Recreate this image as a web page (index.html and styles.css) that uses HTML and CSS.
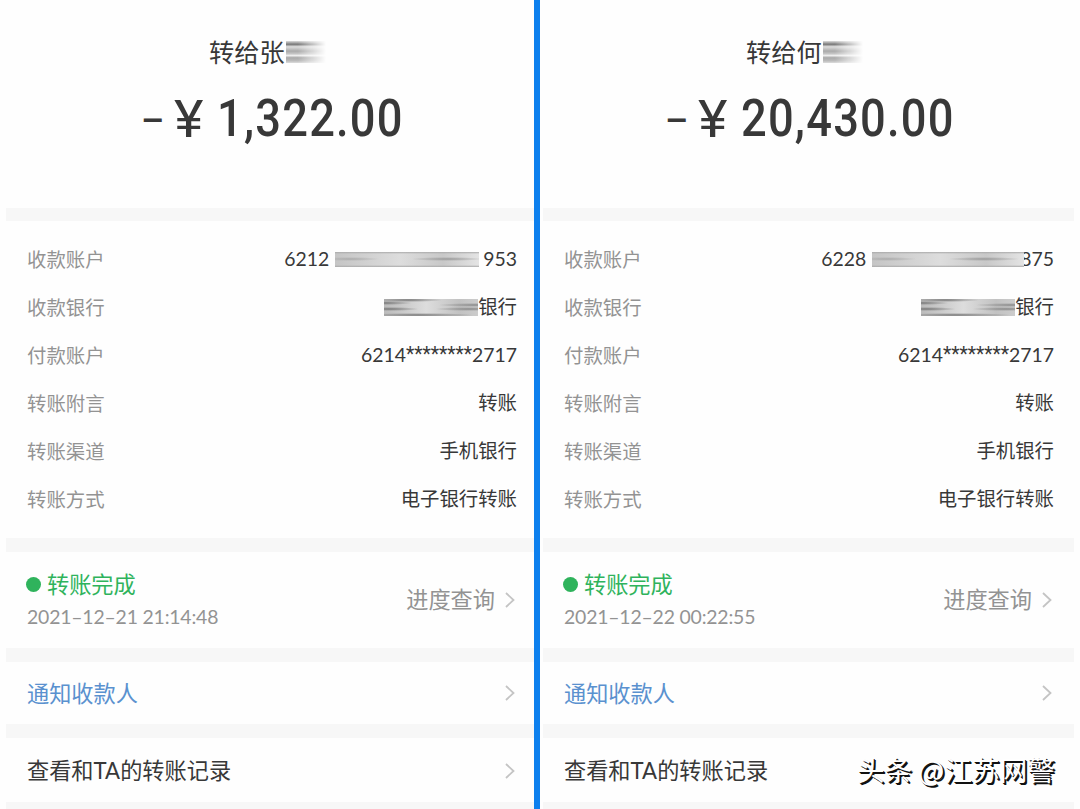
FILE: index.html
```html
<!DOCTYPE html>
<html lang="zh-CN">
  <head>
    <meta charset="UTF-8" />
    <meta name="viewport" content="width=device-width, initial-scale=1.0" />
    <title>转账详情</title>
    <link rel="stylesheet" href="styles.css">
  </head>

  <body>
    <div class="compare">
      <section class="panel">
        <header class="summary">
          <h1>转给张<span class="smudge smudge-name"></span></h1>
          <p class="amount"><span class="minus">–</span><span class="yen">¥</span><span class="number">1,322.00</span></p>
        </header>

        <div class="details">
          <div class="row"><span class="label">收款账户</span><span class="value">6212<span class="smudge smudge-account"></span>953</span></div>
          <div class="row"><span class="label">收款银行</span><span class="value"><span class="smudge smudge-bank"></span>银行</span></div>
          <div class="row"><span class="label">付款账户</span><span class="value">6214<span class="stars">********</span>2717</span></div>
          <div class="row"><span class="label">转账附言</span><span class="value">转账</span></div>
          <div class="row"><span class="label">转账渠道</span><span class="value">手机银行</span></div>
          <div class="row"><span class="label">转账方式</span><span class="value">电子银行转账</span></div>
        </div>

        <div class="status">
          <div>
            <p class="status-title"><span class="dot"></span>转账完成</p>
            <p class="time">2021<i>–</i>12<i>–</i>21 21:14:48</p>
          </div>
          <span class="progress">进度查询</span>
          <svg class="chevron" viewBox="0 0 10 16"><path d="M1 1l7.5 7L1 15" /></svg>
        </div>

        <div class="link notify">
          <span>通知收款人</span>
          <svg class="chevron" viewBox="0 0 10 16"><path d="M1 1l7.5 7L1 15" /></svg>
        </div>

        <div class="link records">
          <span>查看和TA的转账记录</span>
          <svg class="chevron" viewBox="0 0 10 16"><path d="M1 1l7.5 7L1 15" /></svg>
        </div>
      </section>

      <div class="divider"></div>

      <section class="panel panel-right">
        <header class="summary">
          <h1>转给何<span class="smudge smudge-name"></span></h1>
          <p class="amount"><span class="minus">–</span><span class="yen">¥</span><span class="number">20,430.00</span></p>
        </header>

        <div class="details">
          <div class="row"><span class="label">收款账户</span><span class="value">6228<span class="smudge smudge-account wide"></span>875</span></div>
          <div class="row"><span class="label">收款银行</span><span class="value"><span class="smudge smudge-bank"></span>银行</span></div>
          <div class="row"><span class="label">付款账户</span><span class="value">6214<span class="stars">********</span>2717</span></div>
          <div class="row"><span class="label">转账附言</span><span class="value">转账</span></div>
          <div class="row"><span class="label">转账渠道</span><span class="value">手机银行</span></div>
          <div class="row"><span class="label">转账方式</span><span class="value">电子银行转账</span></div>
        </div>

        <div class="status">
          <div>
            <p class="status-title"><span class="dot"></span>转账完成</p>
            <p class="time">2021<i>–</i>12<i>–</i>22 00:22:55</p>
          </div>
          <span class="progress">进度查询</span>
          <svg class="chevron" viewBox="0 0 10 16"><path d="M1 1l7.5 7L1 15" /></svg>
        </div>

        <div class="link notify">
          <span>通知收款人</span>
          <svg class="chevron" viewBox="0 0 10 16"><path d="M1 1l7.5 7L1 15" /></svg>
        </div>

        <div class="link records">
          <span>查看和TA的转账记录</span>
        </div>
      </section>

      <div class="watermark">头条 @江苏网警</div>
    </div>
  </body>
</html>
```
FILE: styles.css
```css
* {
  box-sizing: border-box;
}

body {
  margin: 0;
  background-color: #fefefe;
  color: #383838;
  font-family: Lato, "Noto Sans CJK SC", sans-serif;
}

h1,
p {
  margin: 0;
  font-weight: normal;
}

.compare {
  position: relative;
  display: flex;
  width: 1080px;
  height: 809px;
  padding-left: 6px;
  overflow: hidden;
}

.panel {
  --side: 17px;
  width: 528px;
  flex: none;
}

.panel-right {
  --side: 20px;
  width: 531px;
  margin-left: 3px;
}

.divider {
  width: 6px;
  flex: none;
  background-color: #0d80ee;
}

/* header with payee and amount */
.summary {
  height: 221px;
  padding-top: 34px;
  border-bottom: 13px solid #f7f7f7;
}

.summary h1 {
  display: flex;
  align-items: center;
  height: 36px;
  padding-left: 203px;
  font-size: 25.2px;
  line-height: 36px;
}

.amount {
  display: flex;
  height: 60px;
  margin-top: 19px;
  padding-left: 135px;
  font-family: Roboto, sans-serif;
  font-weight: 500;
  font-size: 52px;
  line-height: 60px;
}

.minus {
  width: 33px;
  font-size: 36px;
  line-height: 64px;
}

.yen {
  width: 43px;
  font-weight: 400;
  font-size: 51px;
  line-height: 62px;
  transform: scaleX(1.1);
  transform-origin: left;
}

.number {
  letter-spacing: 1.4px;
  transform: scaleX(0.87);
  transform-origin: left;
}

.panel-right .amount {
  padding-left: 122px;
}

/* smeared-out private data */
.smudge {
  display: inline-block;
  flex: none;
  background-color: #d2d2d2;
  background-repeat: no-repeat;
}

.smudge-name {
  width: 40px;
  height: 22px;
  margin-left: 1px;
  background-color: transparent;
  background-image: linear-gradient(#ddd, #777 15%, #ddd 26%, #aaa 46%, #c5c5c5 58%, #eee 66%, #aaa 76%, #bbb 90%, #ddd);
  -webkit-mask-image: linear-gradient(90deg, #000 30%, transparent);
  mask-image: linear-gradient(90deg, #000 30%, transparent);
}

.smudge-account {
  width: 144px;
  height: 15px;
  margin: 0 4px 0 6px;
  background-image:
    radial-gradient(ellipse 30px 2px at 15px 7px, #aaa, transparent),
    radial-gradient(ellipse 36px 2px at 112px 7px, #999, transparent),
    linear-gradient(#aaa, transparent 2px, transparent 13px, #aaa),
    linear-gradient(90deg, #c5c5c5, #ddd 45%, #c8c8c8 75%, #e4e4e4);
}

.smudge-account.wide {
  width: 152px;
  margin-right: -4px;
  position: relative;
}

.smudge-bank {
  width: 94px;
  height: 17px;
  background-image:
    radial-gradient(ellipse 34px 2px at 25px 1px, #777, transparent),
    radial-gradient(ellipse 28px 2px at 0 4px, #777, transparent),
    radial-gradient(ellipse 30px 2px at 5px 10px, #777, transparent),
    radial-gradient(ellipse 38px 2px at 92px 6px, #888, transparent),
    radial-gradient(ellipse 34px 2px at 85px 10px, #888, transparent),
    radial-gradient(ellipse 55px 2px at 35px 16px, #777, transparent),
    linear-gradient(90deg, #bbb, #ddd 45%, #c2c2c2 80%, #ccc);
}

.details {
  height: 331px;
  padding: 15px var(--side) 0 21px;
  border-bottom: 14px solid #f7f7f7;
  font-size: 19.4px;
}

.row {
  display: flex;
  justify-content: space-between;
  height: 48px;
  line-height: 47px;
}

.label {
  color: #939393;
}

.value {
  display: flex;
  align-items: center;
  height: 46px;
  line-height: 46px;
}

.stars {
  font-family: Roboto, sans-serif;
  letter-spacing: -0.1px;
}

.status {
  display: flex;
  align-items: center;
  height: 110px;
  padding: 0 calc(var(--side) + 2px) 0 20px;
  border-bottom: 14px solid #f7f7f7;
  color: #939393;
}

.status-title {
  display: flex;
  align-items: center;
  height: 32px;
  color: #2fb35c;
  font-size: 22.2px;
  line-height: 33px;
}

.dot {
  width: 15px;
  height: 15px;
  margin-right: 6px;
  border-radius: 50%;
  background-color: #2fb35c;
}

.time {
  height: 32px;
  padding-left: 1px;
  font-size: 19.4px;
  line-height: 33px;
  letter-spacing: -0.18px;
}

.time i {
  font-style: normal;
}

.progress {
  margin-left: auto;
  padding-bottom: 4px;
  font-size: 22.2px;
}

.chevron {
  width: 10px;
  height: 16px;
  margin-left: 10px;
  fill: none;
  stroke: #c4c4c4;
  stroke-width: 1.8;
}

.link {
  display: flex;
  align-items: center;
  justify-content: space-between;
  padding: 0 calc(var(--side) + 2px) 0 21px;
  border-bottom: 14px solid #f7f7f7;
  font-size: 22.2px;
}

.link span {
  padding-bottom: 3px;
}

.notify {
  height: 76px;
}

.notify span {
  color: #5a91cf;
}

.records {
  height: 78px;
  padding-top: 1px;
}

.watermark {
  position: absolute;
  left: 857px;
  top: 750px;
  color: #fff;
  font-family: "Noto Sans CJK SC", sans-serif;
  font-weight: 400;
  font-size: 27.6px;
  line-height: 38px;
  text-shadow: 2px 2px 0 #111, 1px 1px 0 #111;
  white-space: nowrap;
}
```
